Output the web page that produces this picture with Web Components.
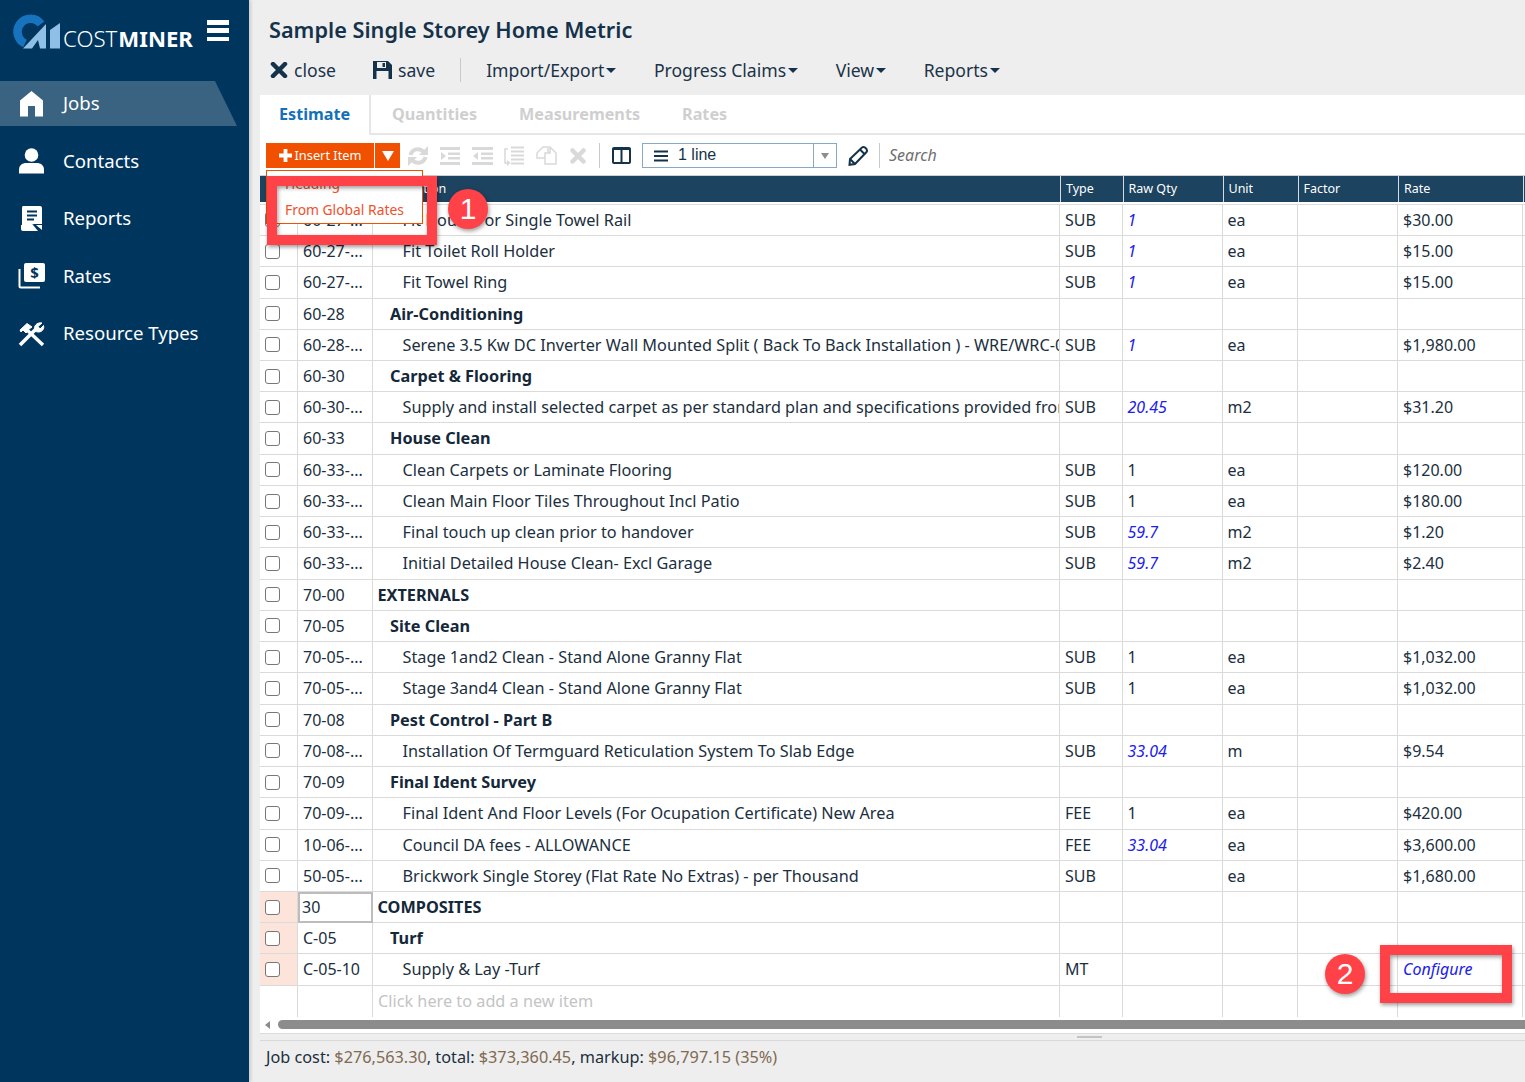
<!DOCTYPE html>
<html>
<head>
<meta charset="utf-8">
<title>CostMiner</title>
<style>
  html, body { margin: 0; height: 100%; overflow: hidden; }
  body { font-family: "Noto Sans", sans-serif; color: #1b2f40; }
</style>
</head>
<body>
<cm-app>
  <cm-sidebar slot="side">
    <cm-nav-item icon="home" active>Jobs</cm-nav-item>
    <cm-nav-item icon="user">Contacts</cm-nav-item>
    <cm-nav-item icon="report">Reports</cm-nav-item>
    <cm-nav-item icon="rates">Rates</cm-nav-item>
    <cm-nav-item icon="tools">Resource Types</cm-nav-item>
  </cm-sidebar>
  <cm-titlebar>Sample Single Storey Home Metric</cm-titlebar>
  <cm-menubar></cm-menubar>
  <cm-panel>
    <cm-tabs></cm-tabs>
    <cm-actions></cm-actions>
    <cm-grid></cm-grid>
  </cm-panel>
  <cm-footer></cm-footer>
  <cm-insert-menu></cm-insert-menu>
  <cm-callout style="left:267px;top:176px;width:170px;height:69px" num="1" bx="181" by="13"></cm-callout>
  <cm-callout style="left:1380px;top:945px;width:132px;height:58px" num="2" bx="-55" by="9"></cm-callout>
</cm-app>

<script>
const ICONS = {
  home: '<svg width="25" height="26" viewBox="0 0 25 26" fill="#fff"><path d="M12.5 0 24 9.5V25.500H16V15H9V25.500H1V9.500Z"/></svg>',
  user: '<svg width="27" height="26" viewBox="0 0 27 26" fill="#fff"><circle cx="13.500" cy="7" r="6.800"/><path d="M1 25.500V21.500C1 17 5 15 8 15H19C22 15 26 17 26 21.500V25.500Z"/></svg>',
  report: '<svg width="22" height="26" viewBox="0 0 22 26"><path fill="#fff" d="M2 0H19Q21 0 21 2V18L13 18Q11 18 11 20L11 20H1V2Q1 0 2 0Z"/><path fill="#fff" d="M0 19H12L17 25H2Q0 25 0 23Z"/><path fill="#fff" d="M15 19H21V24Z"/><path d="M6 5.500H16M6 9.500H16M6 13.500H13" stroke="#00355e" stroke-width="2"/></svg>',
  rates: '<svg width="27" height="26" viewBox="0 0 27 26"><rect x="6" y="0" width="21" height="19" rx="2" fill="#fff"/><path d="M1.500 6V23Q1.500 24.500 3 24.500H22" fill="none" stroke="#fff" stroke-width="2"/><text x="16.500" y="15" font-family="Noto Sans" font-weight="700" font-size="15" text-anchor="middle" fill="#00355e">$</text></svg>',
  tools: '<svg width="27" height="26" viewBox="0 0 27 26" fill="none" stroke="#fff"><path d="M8 8 25 24" stroke-width="3.500"/><path d="M2 9 9 2.500 14 6 11 8 8 12 5 9 3 11Z" fill="#fff" stroke-width="1"/><path d="M2 24 18 8" stroke-width="3.500"/><path d="M17 10C15 5 19 1 24 2L20 5.500 22 8 25.500 4.500C27 9 22 13 17 10Z" fill="#fff" stroke-width="1"/></svg>'
};

// app shell, everything else hangs off this
class CmApp extends HTMLElement {
  constructor() {
    super();
    this.attachShadow({ mode: 'open' });
    this.shadowRoot.innerHTML = `
      <style>
        :host { display: flex; position: relative; width: 100%; height: 100vh; background: #eeeeee; overflow: hidden; }
        .main { flex: 1; min-width: 0; display: flex; flex-direction: column; padding-left: 11px; }
      </style>
      <slot name="side"></slot>
      <div class="main"><slot></slot></div>
    `;
  }
}

class CmSidebar extends HTMLElement {
  constructor() {
    super();
    this.attachShadow({ mode: 'open' });
    this.shadowRoot.innerHTML = `
      <style>
        :host { display: block; flex: none; width: 249px; height: 100%; background: #00355e; box-shadow: 2px 0 3px rgba(0,0,0,.14); color: #fff; }
        .logo { height: 81px; display: flex; align-items: flex-start; position: relative; box-sizing: border-box; padding: 14px 0 0 13px; }
        .word { font-size: 22.200px; line-height: 1; margin: 14px 0 0 3px; font-weight: 300; white-space: nowrap; }
        .word b { font-weight: 700; margin-left: 1px; }
        .burger { position: absolute; left: 207px; top: 20px; width: 22px; height: 21px; display: flex; flex-direction: column; justify-content: space-between; }
        .burger i { display: block; height: 4.500px; background: #fff; }
        nav { display: flex; flex-direction: column; gap: 12.500px; }
      </style>
      <div class="logo">
        <svg width="47" height="35" viewBox="13 14 47 35">
          <path d="M25 43.500A13 13 0 1 1 41 24" fill="none" stroke="#1873bf" stroke-width="8.500"/>
          <path d="M23 48.500 46 24V48.500H40L38 40 32 48.500Z" fill="#8fbfe6"/>
          <path d="M50 30 60 23V48.500H50Z" fill="#8fbfe6"/>
        </svg>
        <div class="word">COST<b>MINER</b></div>
        <div class="burger"><i></i><i></i><i></i></div>
      </div>
      <nav><slot></slot></nav>
    `;
  }
}

class CmNavItem extends HTMLElement {
  constructor() {
    super();
    this.attachShadow({ mode: 'open' });
    this.shadowRoot.innerHTML = `
      <style>
        :host { display: flex; align-items: center; height: 45px; width: 237px; font-size: 18.600px; color: #fff; }
        :host([active]) { background: #3a6281; clip-path: polygon(0 0, 215px 0, 100% 100%, 0 100%); }
        .ic { width: 27px; margin: 0 18px 0 18px; display: flex; justify-content: center; }
        .txt { margin-top: -2px; }
      </style>
      <span class="ic">${ICONS[this.getAttribute('icon')]}</span>
      <span class="txt"><slot></slot></span>
    `;
  }
}

class CmTitlebar extends HTMLElement {
  constructor() {
    super();
    this.attachShadow({ mode: 'open' });
    this.shadowRoot.innerHTML = `
      <style>
        :host { display: block; height: 50px; box-sizing: border-box; padding: 15px 0 0 9px; font-size: 21.700px; line-height: 30px; font-weight: 600; color: #14324a; white-space: nowrap; }
      </style>
      <slot></slot>
    `;
  }
}

class CmMenubar extends HTMLElement {
  constructor() {
    super();
    this.attachShadow({ mode: 'open' });
    this.shadowRoot.innerHTML = `
      <style>
        :host { display: flex; align-items: center; height: 45px; padding: 0 0 5px 10px; box-sizing: border-box; font-size: 17.600px; color: #1b3348; white-space: nowrap; }
        .btn { display: flex; align-items: center; gap: 6px; }
        .sep { width: 1px; height: 24px; background: #c9c9c9; margin: 0 25px; }
        .dd { display: flex; align-items: center; margin-right: 37.500px; }
        .dd::after { content: ""; margin-left: 2px; margin-top: 1px; border: 5px solid transparent; border-top-color: #14324a; border-bottom: 0; }
      </style>
      <span class="btn" style="margin-right:37px">
        <svg width="18" height="16" viewBox="0 0 18 16"><path d="M3 2 15 14M15 2 3 14" stroke="#14324a" stroke-width="4.500" stroke-linecap="round"/></svg>close
      </span>
      <span class="btn">
        <svg width="19" height="18" viewBox="0 0 19 18"><path fill="#14324a" fill-rule="evenodd" d="M0 0H15L19 4V18H0ZM4 1V7H13V1ZM9.500 2H12V6H9.500ZM3.500 10V18H15.500V10Z"/></svg>save
      </span>
      <span class="sep"></span>
      <span class="dd">Import/Export</span>
      <span class="dd">Progress Claims</span>
      <span class="dd">View</span>
      <span class="dd">Reports</span>
    `;
  }
}

class CmPanel extends HTMLElement {
  constructor() {
    super();
    this.attachShadow({ mode: 'open' });
    this.shadowRoot.innerHTML = `
      <style>
        :host { display: flex; flex-direction: column; height: 938px; background: #fff; }
      </style>
      <slot></slot>
    `;
  }
}

class CmTabs extends HTMLElement {
  constructor() {
    super();
    this.attachShadow({ mode: 'open' });
    this.shadowRoot.innerHTML = `
      <style>
        :host { display: flex; height: 40px; box-sizing: border-box; border-bottom: 2px solid #e6e6e6; font-size: 16.200px; font-weight: 700; color: #cfcfcf; white-space: nowrap; }
        span { line-height: 38px; margin-right: 42px; }
        .on { color: #1470bb; width: 111px; height: 40px; margin-right: 21px; box-sizing: border-box; padding-left: 19px; background: #fff; border-right: 2px solid #e6e6e6; }
      </style>
      <span class="on">Estimate</span><span>Quantities</span><span>Measurements</span><span>Rates</span>
    `;
  }
}

class CmActions extends HTMLElement {
  constructor() {
    super();
    this.attachShadow({ mode: 'open' });
    const g = '#d9d9d9';
    this.shadowRoot.innerHTML = `
      <style>
        :host { display: flex; align-items: center; height: 41px; box-sizing: border-box; padding: 1px 0 0 6px; border-bottom: 1px solid #d0d0d0; white-space: nowrap; }
        .ins { background: #f05000; color: #fff; height: 25px; display: flex; align-items: center; font-size: 12.800px; }
        .ins.a { width: 108px; justify-content: center; gap: 3px; margin-right: 1px; }
        .ins.a span { margin-top: -2px; }
        .ins.b { width: 25px; justify-content: center; }
        .ins.b::after { content: ""; border: 6px solid transparent; border-top: 10px solid #fff; border-bottom: 0; }
        svg { display: block; flex: none; }
        .icons { display: flex; align-items: center; margin-left: 8px; }
        .sep { width: 1px; height: 25px; background: #c9c9c9; flex: none; }
        .combo { width: 195px; height: 25px; box-sizing: border-box; border: 1px solid #87a8c6; display: flex; align-items: center; background: #fff; font: 16px "Liberation Sans", sans-serif; color: #14324a; }
        .combo .lbl { flex: 1; display: flex; align-items: center; gap: 10px; padding-left: 11px; }
        .combo .txt { margin-top: -2px; }
        .combo .arr { width: 22px; height: 100%; border-left: 1px solid #87a8c6; display: flex; align-items: center; justify-content: center; }
        .combo .arr::after { content: ""; border: 4px solid transparent; border-top: 6px solid #8d8d8d; border-bottom: 0; }
        .search { font-size: 16px; font-style: italic; color: #6f6f6f; margin: -2px 0 0 9px; }
      </style>
      <div class="ins a">
        <svg width="13" height="13" viewBox="0 0 13 13"><path d="M6.500 0V13M0 6.500H13" stroke="#fff" stroke-width="3.800"/></svg><span>Insert Item</span>
      </div>
      <div class="ins b"></div>
      <div class="icons">
        <svg width="20" height="20" viewBox="0 0 20 20" fill="none" stroke="${g}" stroke-width="4" style="margin-right:12px"><path d="M2.500 9C4 3 11 1 16 6"/><path d="M17.500 11C16 17 9 19 4 14"/><path d="M20 0V9H11Z" fill="${g}" stroke="none"/><path d="M0 20V11H9Z" fill="${g}" stroke="none"/></svg>
        <svg width="20" height="20" viewBox="0 0 20 20" fill="${g}" style="margin-right:12px"><path d="M0 1H20V4H0ZM8 6.500H20V9H8ZM8 11H20V13.500H8ZM0 16H20V19H0ZM1 6V14L6 10Z"/></svg>
        <svg width="21" height="20" viewBox="0 0 21 20" fill="${g}" style="margin-right:11px"><path d="M0 1H21V4H0ZM9 6.500H21V9H9ZM9 11H21V13.500H9ZM0 16H21V19H0ZM6 6V14L1 10Z"/></svg>
        <svg width="20" height="22" viewBox="0 0 20 22" fill="none" stroke="${g}" style="margin-right:12px"><path d="M7 2.500H20M7 6.500H20M7 10.500H20M7 14.500H20M7 18.500H20" stroke-width="2.200"/><path d="M4 4H1V18H3" stroke-width="1.500"/><path d="M3 15V21L6.500 18Z" fill="${g}" stroke="none"/></svg>
        <svg width="21" height="20" viewBox="0 0 21 20" fill="#fff" stroke="${g}" stroke-width="1.500" style="margin-right:13px"><path d="M7 1H12V7L8 12H1V7Z"/><path d="M9 7H14L14 1 20 7V18H9Z"/></svg>
        <svg width="16" height="16" viewBox="0 0 16 16" style="margin-right:13px"><path d="M2.500 2.500 13.500 13.500M13.500 2.500 2.500 13.500" stroke="${g}" stroke-width="4.500" stroke-linecap="round"/></svg>
      </div>
      <span class="sep"></span>
      <svg width="19" height="17" viewBox="0 0 19 17" fill="none" stroke="#14324a" stroke-width="2" style="margin:0 11px 0 12px"><rect x="1" y="1" width="17" height="15" rx="1"/><path d="M9.500 1V16"/><path d="M1 2H18" /></svg>
      <div class="combo">
        <span class="lbl"><svg width="14" height="12" viewBox="0 0 14 12"><path d="M0 1.500H14M0 6H14M0 10.500H14" stroke="#14324a" stroke-width="2"/></svg><span class="txt">1 line</span></span>
        <span class="arr"></span>
      </div>
      <svg width="21" height="21" viewBox="0 0 21 21" fill="none" stroke="#14324a" stroke-width="2" style="margin:0 10px 0 11px"><path d="M2 14 14 2.500Q15.500 1.500 17 2.500L18.500 4Q19.500 5.500 18.500 7L7 19 1.500 19.800Z"/><path d="M12 4.500 16.500 9M2 14 7 19"/></svg>
      <span class="sep"></span>
      <span class="search">Search</span>
    `;
  }
}

const COLS = '38px 75px 687px 62.500px 100px 75px 100.500px 124.500px 60px';
// [code, level(0-2), description, type, qty, formula?, unit, rate]
const ROWS = [
  ['60-27-...', 2, 'Fit Double or Single Towel Rail', 'SUB', '1', 1, 'ea', '$30.00'],
  ['60-27-...', 2, 'Fit Toilet Roll Holder', 'SUB', '1', 1, 'ea', '$15.00'],
  ['60-27-...', 2, 'Fit Towel Ring', 'SUB', '1', 1, 'ea', '$15.00'],
  ['60-28', 1, 'Air-Conditioning'],
  ['60-28-...', 2, 'Serene 3.5 Kw DC Inverter Wall Mounted Split ( Back To Back Installation ) - WRE/WRC-09', 'SUB', '1', 1, 'ea', '$1,980.00'],
  ['60-30', 1, 'Carpet & Flooring'],
  ['60-30-...', 2, 'Supply and install selected carpet as per standard plan and specifications provided from', 'SUB', '20.45', 1, 'm2', '$31.20'],
  ['60-33', 1, 'House Clean'],
  ['60-33-...', 2, 'Clean Carpets or Laminate Flooring', 'SUB', '1', 0, 'ea', '$120.00'],
  ['60-33-...', 2, 'Clean Main Floor Tiles Throughout Incl Patio', 'SUB', '1', 0, 'ea', '$180.00'],
  ['60-33-...', 2, 'Final touch up clean prior to handover', 'SUB', '59.7', 1, 'm2', '$1.20'],
  ['60-33-...', 2, 'Initial Detailed House Clean- Excl Garage', 'SUB', '59.7', 1, 'm2', '$2.40'],
  ['70-00', 0, 'EXTERNALS'],
  ['70-05', 1, 'Site Clean'],
  ['70-05-...', 2, 'Stage 1and2 Clean - Stand Alone Granny Flat', 'SUB', '1', 0, 'ea', '$1,032.00'],
  ['70-05-...', 2, 'Stage 3and4 Clean - Stand Alone Granny Flat', 'SUB', '1', 0, 'ea', '$1,032.00'],
  ['70-08', 1, 'Pest Control - Part B'],
  ['70-08-...', 2, 'Installation Of Termguard Reticulation System To Slab Edge', 'SUB', '33.04', 1, 'm', '$9.54'],
  ['70-09', 1, 'Final Ident Survey'],
  ['70-09-...', 2, 'Final Ident And Floor Levels (For Ocupation Certificate) New Area', 'FEE', '1', 0, 'ea', '$420.00'],
  ['10-06-...', 2, 'Council DA fees - ALLOWANCE', 'FEE', '33.04', 1, 'ea', '$3,600.00'],
  ['50-05-...', 2, 'Brickwork Single Storey (Flat Rate No Extras) - per Thousand', 'SUB', '', 0, 'ea', '$1,680.00'],
  ['30', 0, 'COMPOSITES', '', '', 0, '', '', 'pink sel'],
  ['C-05', 1, 'Turf', '', '', 0, '', '', 'pink'],
  ['C-05-10', 2, 'Supply & Lay -Turf', 'MT', '', 0, '', 'CONFIG', 'pink']
];

class CmGrid extends HTMLElement {
  constructor() {
    super();
    this.attachShadow({ mode: 'open' });
    const esc = s => (s || '').replace(/&/g, '&amp;');
    const rows = ROWS.map(r => {
      const flags = r[8] || '';
      const lvl = r[1];
      const heading = r.length === 3 || flags.includes('pink') && lvl < 2;
      const rate = r[7] === 'CONFIG' ? '<em>Configure</em>' : esc(r[7]);
      return `<div class="row ${flags}">
        <div class="c chk"><i class="box"></i></div>
        <div class="c code">${r[0]}</div>
        <div class="c desc ${heading ? 'head' : ''}" style="padding-left:${4.5 + lvl * 12.5}px">${esc(r[2])}</div>
        <div class="c">${r[3] || ''}</div>
        <div class="c">${r[5] ? `<em>${r[4]}</em>` : (r[4] || '')}</div>
        <div class="c">${r[6] || ''}</div>
        <div class="c"></div>
        <div class="c">${rate}</div>
        <div class="c"></div>
      </div>`;
    }).join('');
    this.shadowRoot.innerHTML = `
      <style>
        :host { display: flex; flex-direction: column; flex: 1; min-height: 0; overflow: hidden; font-size: 16px; color: #1b2f40; }
        .hdr, .row { display: grid; grid-template-columns: ${COLS}; width: max-content; white-space: nowrap; }
        .hdr { height: 26px; background: #1c435f; color: #fff; font-size: 12.500px; line-height: 25px; flex: none; padding-left: 1px; }
        .hdr div { box-sizing: border-box; padding-left: 5px; border-right: 1px solid #d5dbe0; overflow: hidden; }
        .gap { height: 2.830px; flex: none; border-bottom: 1px solid #ddd; box-sizing: border-box; }
        .row { height: 31.240px; box-sizing: border-box; flex: none; }
        .c { box-sizing: border-box; border-right: 1px solid #dadada; border-bottom: 1px solid #dadada; padding-left: 5px; line-height: 30px; overflow: hidden; min-width: 0; }
        .desc { font-size: 16.250px; }
        .chk { display: flex; align-items: center; padding-left: 5px; }
        .box { display: block; width: 15px; height: 15px; box-sizing: border-box; border: 1.500px solid #777; border-radius: 3px; background: #fff; }
        .pink .chk { background: #fde4da; }
        .sel .code { border: 2px solid #bcbcbc; padding-left: 2px; line-height: 27px; }
        .head { font-weight: 700; color: #14283a; }
        em { color: #2020ee; font-style: italic; }
        .add .c { border-bottom: 0; }
        .hint { color: #c4c4c4; }
        .bar { height: 16px; flex: none; display: flex; align-items: center; margin-top: auto; padding-bottom: 1px; box-sizing: border-box; }
        .bar .arrow { border: 4px solid transparent; border-right: 5px solid #8c8c8c; border-left: 0; margin: 0 8px 0 5px; }
        .bar .thumb { flex: 1; height: 9px; background: #8c8c8c; border-radius: 5px 0 0 5px; }
      </style>
      <div class="hdr">
        <div></div><div></div><div>Description</div><div>Type</div><div>Raw Qty</div><div>Unit</div><div>Factor</div><div>Rate</div><div></div>
      </div>
      <div class="gap"></div>
      ${rows}
      <div class="row add">
        <div class="c"></div><div class="c"></div><div class="c hint desc">Click here to add a new item</div><div class="c"></div><div class="c"></div><div class="c"></div><div class="c"></div><div class="c"></div><div class="c"></div>
      </div>
      <div class="bar"><i class="arrow"></i><div class="thumb"></div></div>
    `;
  }
}

class CmFooter extends HTMLElement {
  constructor() {
    super();
    this.attachShadow({ mode: 'open' });
    this.shadowRoot.innerHTML = `
      <style>
        :host { display: block; flex: 1; background: #eee; font-size: 16.250px; color: #1b2f40; white-space: nowrap; }
        .split { height: 8px; box-sizing: border-box; border-top: 1px solid #dcdcdc; border-bottom: 1px solid #d8d8d8; padding-left: 817px; }
        .split i { display: block; width: 25px; height: 2px; background: #c4c4c4; margin-top: 2px; }
        .txt { padding: 4px 0 0 6px; line-height: 24px; }
        b { font-weight: 400; color: #7f6a52; }
      </style>
      <div class="split"><i></i></div>
      <div class="txt">Job cost: <b>$276,563.30</b>, total: <b>$373,360.45</b>, markup: <b>$96,797.15 (35%)</b></div>
    `;
  }
}

// open dropdown under the insert button
class CmInsertMenu extends HTMLElement {
  constructor() {
    super();
    this.attachShadow({ mode: 'open' });
    this.shadowRoot.innerHTML = `
      <style>
        :host { position: absolute; left: 266px; top: 170px; width: 157px; height: 54px; box-sizing: border-box; background: #fff; border: 1px solid #f05000; font-size: 13.850px; color: #f0512b; padding-left: 18px; }
        div { height: 26px; line-height: 26px; white-space: nowrap; }
      </style>
      <div>Heading</div>
      <div>From Global Rates</div>
    `;
  }
}

class CmCallout extends HTMLElement {
  constructor() {
    super();
    this.attachShadow({ mode: 'open' });
    const bx = this.getAttribute('bx'), by = this.getAttribute('by');
    this.shadowRoot.innerHTML = `
      <style>
        :host { position: absolute; box-sizing: border-box; display: block; }
        .frame { position: absolute; inset: 0; border: 10px solid #ff4248; box-shadow: 1px 2px 4px rgba(0,0,0,.4), inset 1px 2px 4px rgba(0,0,0,.4); }
        .num { position: absolute; left: ${bx}px; top: ${by}px; width: 40px; height: 40px; border-radius: 50%; background: #ff4248; box-shadow: 1px 2px 4px rgba(0,0,0,.4); color: #fff; font: 30px/40px "Liberation Sans", sans-serif; text-align: center; }
      </style>
      <div class="frame"></div>
      <div class="num">${this.getAttribute('num')}</div>
    `;
  }
}

customElements.define('cm-app', CmApp);
customElements.define('cm-sidebar', CmSidebar);
customElements.define('cm-nav-item', CmNavItem);
customElements.define('cm-titlebar', CmTitlebar);
customElements.define('cm-menubar', CmMenubar);
customElements.define('cm-panel', CmPanel);
customElements.define('cm-tabs', CmTabs);
customElements.define('cm-actions', CmActions);
customElements.define('cm-grid', CmGrid);
customElements.define('cm-footer', CmFooter);
customElements.define('cm-insert-menu', CmInsertMenu);
customElements.define('cm-callout', CmCallout);
</script>
</body>
</html>
